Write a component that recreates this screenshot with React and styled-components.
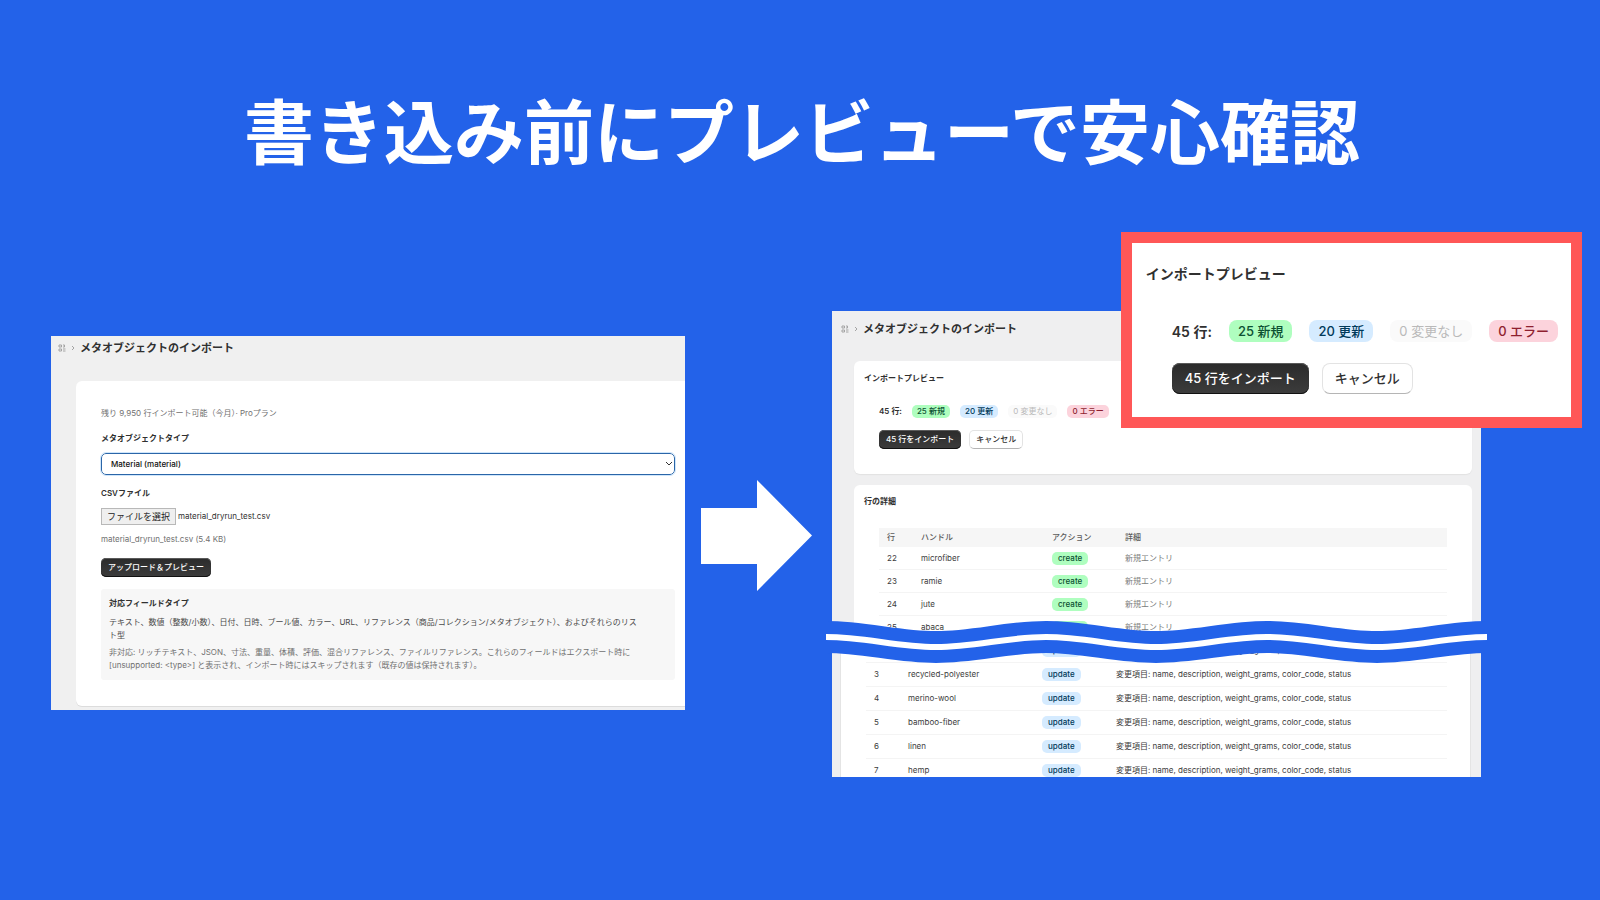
import React from "react";
import styled, { createGlobalStyle, css } from "styled-components";

const GlobalStyle = createGlobalStyle`
  *, *::before, *::after { box-sizing: border-box; }
  body { margin: 0; background: #2362e9; }
  h1, h2, h3, p { margin: 0; }
  button, select, input { font: inherit; }
`;

const Slide = styled.main`
  min-height: 100vh;
  overflow: hidden;
  background: #2362e9;
  color: #303030;
  font-family: Inter, "Noto Sans CJK JP", sans-serif;
  font-size: 8px;
  line-height: 13px;
`;

const Headline = styled.h1`
  padding: 79px 0 132px 4px;
  text-align: center;
  color: #fff;
  font-family: "Noto Sans CJK JP", sans-serif;
  font-size: 70px;
  line-height: 100px;
  font-weight: 700;
`;

const Steps = styled.div`
  display: grid;
  grid-template-columns: minmax(0, 634fr) 115px minmax(0, 649fr);
  column-gap: 16px;
  align-items: start;
  padding: 0 119px 0 51px;
`;

const ImportScreen = styled.section`
  margin-top: 25px;
  padding: 4px 0 4px 25px;
  background: #f0f0f0;
`;

const Breadcrumb = styled.header`
  display: flex;
  align-items: center;
  gap: 5px;
  margin-left: ${(p) => (p.$inset ? -13 : -18)}px;
  padding-bottom: ${(p) => (p.$inset ? 24 : 25)}px;

  svg { flex: none; color: #a4a4a4; }
`;

const PageTitle = styled.h2`
  font-size: 11px;
  line-height: 16px;
  font-weight: 600;
`;

const FormCard = styled.form`
  display: flex;
  flex-direction: column;
  gap: 12px;
  padding: 26px 10px 26px 25px;
  background: #fff;
  border-radius: 6px 0 0 6px;
  box-shadow: 0 1px 0 #dcdcdc;
`;

const Muted = styled.p`
  color: #707070;
`;

const Field = styled.div`
  display: flex;
  flex-direction: column;
  gap: 8px;
`;

const FieldLabel = styled.label`
  font-weight: 600;
`;

const SelectBox = styled.div`
  display: grid;
  align-items: center;

  > * { grid-area: 1 / 1; }
  svg { justify-self: end; margin-right: 3px; pointer-events: none; }
`;

const Select = styled.select`
  appearance: none;
  width: 100%;
  height: 22px;
  padding: 0 9px;
  border: 1px solid #2b66a8;
  border-radius: 5px;
  outline: 1px solid #cfe6fb;
  background: #fff;
  color: #111;
  font-weight: 500;
`;

const FileRow = styled.div`
  display: flex;
  align-items: center;
  gap: 2px;
`;

const HiddenFile = styled.input`
  position: absolute;
  width: 1px;
  height: 1px;
  opacity: 0;
`;

const FileButton = styled.label`
  height: 17px;
  padding: 0 5px;
  border: 1px solid #b8b8b8;
  background: #efefef;
  color: #222;
  font-size: 9px;
  line-height: 15px;
`;

const PrimaryButton = styled.button`
  align-self: flex-start;
  height: ${(p) => (p.$large ? 31 : 19)}px;
  padding: 0 ${(p) => (p.$large ? 13 : 7)}px;
  border: 0;
  border-radius: ${(p) => (p.$large ? 8 : 5)}px;
  background: linear-gradient(#2b2b2b, #3c3c3c);
  box-shadow: inset 0 1px 0 #5a5a5a, inset 0 -1px 0 #111;
  color: #fff;
  font-weight: 500;
  line-height: inherit;
  white-space: nowrap;
`;

const SecondaryButton = styled(PrimaryButton)`
  padding: 0 ${(p) => (p.$large ? 12 : 6)}px;
  border: 1px solid #e3e3e3;
  border-bottom-color: #b5b5b5;
  background: #fff;
  box-shadow: none;
  color: #303030;
`;

const Note = styled.div`
  display: flex;
  flex-direction: column;
  gap: 4px;
  padding: 8px;
  border-radius: 3px;
  background: #f7f7f7;
  color: #4a4a4a;
`;

const NoteTitle = styled.h3`
  padding-bottom: 2px;
  color: #303030;
  font-size: 8px;
  font-weight: 600;
`;

const ArrowArt = styled.svg`
  display: block;
  margin-top: 169px;
`;

const PreviewScreen = styled.section`
  position: relative;
`;

const Pane = styled.div`
  background: #efeff0;
  padding: ${(p) => (p.$lower ? "0 10px 0 8px" : "10px 9px 0 22px")};
`;

const Card = styled.div`
  background: #fff;
  border-radius: 6px;
  padding: 11px 10px 25px;
  margin-bottom: 11px;
  box-shadow: 0 1px 1px #e2e2e2;
`;

const TableCard = styled(Card)`
  margin-bottom: 0;
  padding: 10px 25px 0;
  border-radius: 6px 6px 0 0;
  box-shadow: none;
`;

const LowerCard = styled.div`
  background: #fff;
  border: solid #e4e4e4;
  border-width: 0 1px;
  padding: 5px 23px 0 25px;
`;

const CardTitle = styled.h3`
  margin-left: ${(p) => (p.$outdent ? -15 : 0)}px;
  padding-bottom: ${(p) => (p.$large ? 36 : 20)}px;
  font-size: ${(p) => (p.$large ? 14 : 8)}px;
  line-height: ${(p) => (p.$large ? 20 : 13)}px;
  font-weight: 600;
`;

const Summary = styled.div`
  display: flex;
  flex-direction: column;
  gap: ${(p) => (p.$large ? 21 : 12)}px;
  padding-left: ${(p) => (p.$large ? 26 : 15)}px;
  font-size: ${(p) => (p.$large ? 13 : 8)}px;
`;

const SummaryRow = styled.div`
  display: flex;
  align-items: center;
  gap: ${(p) => p.$gap}px;
`;

const Total = styled.span`
  font-size: ${(p) => (p.$large ? 14 : 8)}px;
  font-weight: 600;
  white-space: nowrap;
`;

const tones = {
  success: css`background: #affebf; color: #0c5132;`,
  info: css`background: #d5ebff; color: #003a5a;`,
  muted: css`background: #fafafa; color: #b9b9b9;`,
  critical: css`background: #fcd3dc; color: #8e1f2f;`,
};

const Badge = styled.span`
  display: inline-block;
  padding: 0 ${(p) => (p.$large ? 9 : 5)}px;
  border-radius: ${(p) => (p.$large ? 8 : 5)}px;
  line-height: ${(p) => (p.$large ? 22 : 13)}px;
  font-weight: ${(p) => (p.$tone === "muted" ? 400 : 500)};
  white-space: nowrap;
  vertical-align: top;
  ${(p) => tones[p.$tone]}
`;

const Table = styled.table`
  width: 100%;
  table-layout: fixed;
  border-spacing: 0;
  line-height: 13px;

  th, td { padding: 0 0 0 8px; text-align: left; white-space: nowrap; }
  th { height: 19px; background: #f6f6f6; color: #5c5c5c; font-weight: 500; }
  td { padding-top: 5px; padding-bottom: ${(p) => (p.$lower ? 5 : 4)}px; border-bottom: 1px solid #f4f4f4; }
  tr:last-child td { padding-bottom: 0; border-bottom: 0; }
  ${Badge} { padding: 0 6px; }
`;

const Entry = styled.td`
  color: ${(p) => (p.$muted ? "#7c7c7c" : "#3c3c3c")};
`;

const Wave = styled.svg`
  position: absolute;
  left: -6px;
  top: 306px;
  width: calc(100% + 12px);
  height: 50px;
  overflow: hidden;
`;

const Callout = styled.aside`
  position: absolute;
  top: -79px;
  right: -101px;
  padding: 21px 13px 23px 14px;
  border: 11px solid #ff5757;
  background: #fff;
`;

function Crumbs({ inset = false }) {
  return (
    <Breadcrumb $inset={inset}>
      <svg width="8" height="8" viewBox="0 0 16 16" fill="none" stroke="currentColor" strokeWidth="2" aria-hidden="true">
        <path d="M2 2h5v4H2zM2 10h5v4H2zM10 2h3v4h-3M10 10h5M10 14h5" />
      </svg>
      <svg width="4" height="6" viewBox="0 0 4 6" fill="none" stroke="currentColor" aria-hidden="true">
        <path d="M1 1l2 2-2 2" />
      </svg>
      <PageTitle>メタオブジェクトのインポート</PageTitle>
    </Breadcrumb>
  );
}

function ImportSummary({ large = false }) {
  return (
    <>
      <CardTitle $large={large}>インポートプレビュー</CardTitle>
      <Summary $large={large}>
        <SummaryRow $gap={large ? 17 : 10}>
          <Total $large={large}>45 行:</Total>
          <Badge $large={large} $tone="success">25 新規</Badge>
          <Badge $large={large} $tone="info">20 更新</Badge>
          <Badge $large={large} $tone="muted">0 変更なし</Badge>
          <Badge $large={large} $tone="critical">0 エラー</Badge>
        </SummaryRow>
        <SummaryRow $gap={large ? 13 : 8}>
          <PrimaryButton type="button" $large={large}>45 行をインポート</PrimaryButton>
          <SecondaryButton type="button" $large={large}>キャンセル</SecondaryButton>
        </SummaryRow>
      </Summary>
    </>
  );
}

const created = [[22, "microfiber"], [23, "ramie"], [24, "jute"], [25, "abaca"]];
const updated = [
  [2, "organic-cotton"],
  [3, "recycled-polyester"],
  [4, "merino-wool"],
  [5, "bamboo-fiber"],
  [6, "linen"],
  [7, "hemp"],
];

export default function App() {
  return (
    <Slide lang="ja">
      <GlobalStyle />
      <Headline>書き込み前にプレビューで安心確認</Headline>
      <Steps>
        <ImportScreen>
          <Crumbs />
          <FormCard>
            <Muted>残り 9,950 行インポート可能（今月）· Proプラン</Muted>
            <Field>
              <FieldLabel htmlFor="type">メタオブジェクトタイプ</FieldLabel>
              <SelectBox>
                <Select id="type" defaultValue="material">
                  <option value="material">Material (material)</option>
                </Select>
                <svg width="6" height="4" viewBox="0 0 6 4" fill="none" stroke="#333" aria-hidden="true">
                  <path d="M0 0l3 3 3-3" />
                </svg>
              </SelectBox>
            </Field>
            <Field>
              <FieldLabel htmlFor="csv">CSVファイル</FieldLabel>
              <FileRow>
                <HiddenFile id="csv" type="file" accept=".csv" />
                <FileButton htmlFor="csv">ファイルを選択</FileButton>
                <span>material_dryrun_test.csv</span>
              </FileRow>
              <Muted>material_dryrun_test.csv (5.4 KB)</Muted>
            </Field>
            <PrimaryButton type="button">アップロード＆プレビュー</PrimaryButton>
            <Note>
              <NoteTitle>対応フィールドタイプ</NoteTitle>
              <p>
                テキスト、数値（整数/小数）、日付、日時、ブール値、カラー、URL、リファレンス（商品/コレクション/メタオブジェクト）、およびそれらのリス
                <br />
                ト型
              </p>
              <Muted>
                非対応: リッチテキスト、JSON、寸法、重量、体積、評価、混合リファレンス、ファイルリファレンス。これらのフィールドはエクスポート時に
                <br />
                [unsupported: &lt;type&gt;] と表示され、インポート時にはスキップされます（既存の値は保持されます）。
              </Muted>
            </Note>
          </FormCard>
        </ImportScreen>

        <ArrowArt width="111" height="111" viewBox="0 0 111 111" aria-hidden="true">
          <path d="M0 28H56V0L111 55.500L56 111V84H0Z" fill="#fff" />
        </ArrowArt>

        <PreviewScreen>
          <Pane>
            <Crumbs inset />
            <Card>
              <ImportSummary />
            </Card>
            <TableCard>
              <CardTitle $outdent>行の詳細</CardTitle>
              <Table>
                <colgroup>
                  <col width="34" /><col width="131" /><col width="73" /><col />
                </colgroup>
                <thead>
                  <tr><th>行</th><th>ハンドル</th><th>アクション</th><th>詳細</th></tr>
                </thead>
                <tbody>
                  {created.map(([row, handle]) => (
                    <tr key={row}>
                      <Entry>{row}</Entry>
                      <Entry>{handle}</Entry>
                      <Entry><Badge $tone="success">create</Badge></Entry>
                      <Entry $muted>新規エントリ</Entry>
                    </tr>
                  ))}
                </tbody>
              </Table>
            </TableCard>
          </Pane>
          <Pane $lower>
            <LowerCard>
              <Table $lower>
                <colgroup>
                  <col width="34" /><col width="134" /><col width="74" /><col />
                </colgroup>
                <tbody>
                  {updated.map(([row, handle]) => (
                    <tr key={row}>
                      <Entry>{row}</Entry>
                      <Entry>{handle}</Entry>
                      <Entry><Badge $tone="info">update</Badge></Entry>
                      <Entry>変更項目: name, description, weight_grams, color_code, status</Entry>
                    </tr>
                  ))}
                </tbody>
              </Table>
            </LowerCard>
          </Pane>
          <Wave viewBox="0 0 661 50" preserveAspectRatio="none" fill="none" aria-hidden="true">
            <path d="M0 20C40 20 70 30 110 30S180 20 220 20S290 30 330 30S401 20 441 20S511 30 551 30S621 20 661 20" stroke="#2362e9" strokeWidth="32" />
            <path d="M0 20C40 20 70 30 110 30S180 20 220 20S290 30 330 30S401 20 441 20S511 30 551 30S621 20 661 20" stroke="#fff" strokeWidth="6" />
          </Wave>
          <Callout>
            <ImportSummary large />
          </Callout>
        </PreviewScreen>
      </Steps>
    </Slide>
  );
}
